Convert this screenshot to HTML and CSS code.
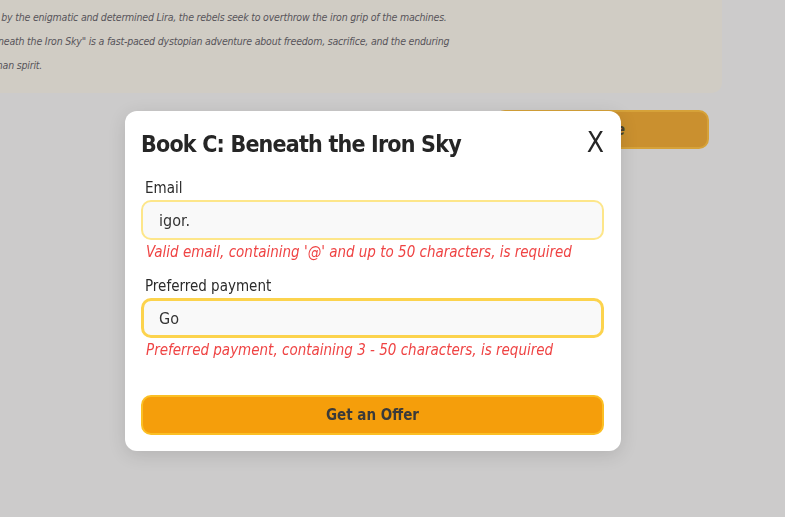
FILE: index.html
```html
<!DOCTYPE html>
<html lang="en">
<head>
    <meta charset="UTF-8">
    <meta name="viewport" content="width=device-width, initial-scale=1.0">
    <title>Beneath the Iron Sky</title>
    <link rel="stylesheet" href="styles.css">
</head>
<body>
    <main class="page">
        <article class="book-card">
            <p class="book-text">
                <span class="line">the last free city stands against the automatons, and a hidden resistance grows in the dark</span>
                <span class="line">Led by the enigmatic and determined Lira, the rebels seek to overthrow the iron grip of the machines.</span>
                <span class="line">"Beneath the Iron Sky" is a fast-paced dystopian adventure about freedom, sacrifice, and the enduring</span>
                <span class="line">human spirit.</span>
            </p>
        </article>
        <div class="book-actions">
            <button class="buy-btn" type="button">Get a Quote</button>
        </div>
    </main>

    <div class="modal">
        <div class="modal-head">
            <h2>Book C: Beneath the Iron Sky</h2>
            <button class="close-btn" type="button" aria-label="Close">X</button>
        </div>
        <form class="offer-form">
            <label for="email">Email</label>
            <input type="text" id="email" value="igor.">
            <p class="error">Valid email, containing '@' and up to 50 characters, is required</p>

            <label for="payment">Preferred payment</label>
            <input type="text" id="payment" class="focused" value="Go">
            <p class="error">Preferred payment, containing 3 - 50 characters, is required</p>

            <button type="submit" class="offer-btn">Get an Offer</button>
        </form>
    </div>
</body>
</html>
```

FILE: styles.css
```css
body {
    margin: 0;
    background-color: #cccbcb;
    font-family: "Liberation Sans Narrow", "DejaVu Sans Condensed", "Liberation Sans", sans-serif;
    color: #2b2b2b;
    overflow: hidden;
}

.page {
    width: 722px;
}

.book-card {
    margin-left: -40px;
    margin-top: -23px;
    background-color: #d0ccc4;
    border-radius: 0 0 10px 0;
    padding: 4px 0 16px 22px;
}

.book-text {
    margin: 0;
    font-style: italic;
    font-size: 10.5px;
    letter-spacing: -0.2px;
    line-height: 24px;
    color: #57545a;
}

.line {
    display: block;
    white-space: nowrap;
}

.book-actions {
    display: flex;
    justify-content: flex-end;
    padding-right: 13px;
    margin-top: 17px;
}

.buy-btn {
    width: 214px;
    height: 39px;
    border: 2px solid #d6a239;
    border-radius: 10px;
    background-color: #ca902f;
    font-family: inherit;
    font-style: italic;
    font-weight: bold;
    font-size: 15px;
    color: #4a3f30;
    text-align: right;
    padding-right: 82px;
    overflow: hidden;
    white-space: nowrap;
}

.modal {
    position: fixed;
    left: 125px;
    top: 111px;
    width: 496px;
    box-sizing: border-box;
    padding: 16px 17px 16px 16px;
    background: #fff;
    border-radius: 12px;
    box-shadow: 0 4px 18px rgba(0, 0, 0, 0.12);
}

.modal-head {
    display: flex;
    justify-content: space-between;
    align-items: center;
    height: 34px;
    margin-bottom: 15px;
}

.modal-head h2 {
    margin: 0;
    font-size: 23px;
    letter-spacing: -0.8px;
    font-weight: bold;
    color: #262626;
}

.close-btn {
    border: none;
    background: none;
    padding: 0;
    font-family: inherit;
    font-size: 28px;
    font-weight: normal;
    color: #262626;
    line-height: 1;
    margin-top: -2px;
}

.offer-form {
    display: flex;
    flex-direction: column;
}

.offer-form label {
    font-size: 15px;
    line-height: 24px;
    padding-left: 4px;
    color: #2b2b2b;
}

.offer-form input {
    height: 40px;
    box-sizing: border-box;
    border: 2px solid #fde68a;
    border-radius: 10px;
    background: #f9f9f9;
    padding: 0 16px;
    font-family: inherit;
    font-size: 16px;
    color: #333;
    outline: none;
}

.offer-form input.focused {
    border: 3px solid #fcd34d;
    padding-left: 15px;
}

.error {
    margin: 2px 0 12px 5px;
    font-size: 15px;
    line-height: 20px;
    font-style: italic;
    color: #ef4444;
}

.offer-btn {
    margin-top: 23px;
    height: 40px;
    border: 2px solid #fbbf24;
    border-radius: 10px;
    background-color: #f59e0b;
    font-family: inherit;
    font-size: 15px;
    font-weight: bold;
    color: #3a3a3a;
}
```
